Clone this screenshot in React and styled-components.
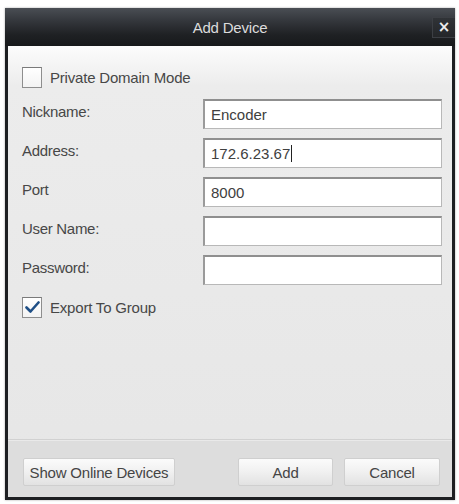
import React from "react";
import styled, { createGlobalStyle } from "styled-components";

const Global = createGlobalStyle`
  html, body { margin: 0; padding: 0; background: #ffffff; }
  body { font-family: "Liberation Sans", Arial, sans-serif; }
  * { box-sizing: border-box; }
`;

const Page = styled.div`
  padding: 8px 4px 4px 5px;
  width: 459px;
  height: 504px;
`;

const Dialog = styled.div`
  width: 450px;
  height: 492px;
  display: flex;
  flex-direction: column;
  background: #1d1f22;
  box-shadow: 0 0 2px rgba(0, 0, 0, 0.35);
`;

const TitleBar = styled.div`
  position: relative;
  height: 38px;
  flex: none;
  display: flex;
  align-items: center;
  justify-content: center;
  background: linear-gradient(#4a4e54 0%, #33363b 35%, #1f2124 70%, #17191b 100%);
  color: #dcdcdc;
  font-size: 15px;
  letter-spacing: -0.2px;
`;

const CloseButton = styled.button`
  position: absolute;
  right: 0;
  top: 9px;
  width: 23px;
  height: 21px;
  border: 1px solid #3c3f44;
  border-right: none;
  background: linear-gradient(#303337, #242629);
  color: #eeeeee;
  font-family: "DejaVu Sans", sans-serif;
  font-size: 15px;
  font-weight: bold;
  line-height: 1;
  padding: 0;
  display: flex;
  align-items: center;
  justify-content: center;
`;

const Body = styled.div`
  flex: 1;
  display: flex;
  flex-direction: column;
  margin: 0 3px 3px 3px;
  background: linear-gradient(#fcfcfc 0px, #ececec 40px, #e6e6e6 100%);
  color: #474747;
  font-size: 15px;
`;

const Content = styled.div`
  flex: 1;
  padding: 20px 10px 0 14px;
  display: flex;
  flex-direction: column;
`;

const CheckRow = styled.label`
  display: flex;
  align-items: center;
  gap: 8px;
  height: 22px;
  letter-spacing: -0.2px;
`;

const Box = styled.span`
  width: 20px;
  height: 21px;
  flex: none;
  border: 1px solid #8e8e8e;
  border-top-color: #7a7a7a;
  background: linear-gradient(#ffffff, #f3f3f3);
  display: flex;
  align-items: center;
  justify-content: center;
`;

const Form = styled.div`
  display: grid;
  grid-template-columns: 181px 239px;
  row-gap: 9px;
  margin-top: 11px;
`;

const Label = styled.div`
  display: flex;
  align-items: center;
  padding-bottom: 5px;
  letter-spacing: -0.3px;
`;

const Field = styled.div`
  height: 30px;
  border: 1px solid #b8b8b8;
  border-top: 2px solid #8f8f8f;
  border-left: 2px solid #9a9a9a;
  background: #ffffff;
  display: flex;
  align-items: center;
  padding-left: 6px;
  color: #404040;
  font-size: 15px;
`;

const Caret = styled.span`
  display: inline-block;
  width: 1px;
  height: 17px;
  background: #222;
  margin-left: 1px;
`;

const ExportRow = styled(CheckRow)`
  margin-top: 11px;
`;

const Footer = styled.div`
  height: 58px;
  flex: none;
  display: flex;
  align-items: flex-start;
  padding: 18px 12px 0 15px;
  background: #dddddd;
  border-top: 1px solid #d1d1d1;
  box-shadow: inset 0 1px 0 #e9e9e9;
`;

const Button = styled.button`
  height: 28px;
  width: ${(p) => p.$w}px;
  margin-left: ${(p) => p.$ml || 0}px;
  border: 1px solid #cfcfcf;
  border-radius: 2px;
  background: linear-gradient(#fbfbfb 0%, #f0f0f0 50%, #e2e2e2 100%);
  color: #454545;
  font-family: "Liberation Sans", Arial, sans-serif;
  font-size: 15px;
  letter-spacing: -0.2px;
  padding: 0;
`;

const Check = () => (
  <svg width="15" height="13" viewBox="0 0 15 13">
    <path d="M1.5 6.5 L5.5 10.5 L13.5 1.5" fill="none" stroke="#1f4f86" strokeWidth="2.6" strokeLinecap="round" strokeLinejoin="round" />
  </svg>
);

const fields = [
  { label: "Nickname:", value: "Encoder" },
  { label: "Address:", value: "172.6.23.67", caret: true },
  { label: "Port", value: "8000" },
  { label: "User Name:", value: "" },
  { label: "Password:", value: "" },
];

export default function App() {
  return (
    <>
      <Global />
      <Page>
        <Dialog>
          <TitleBar>
            Add Device
            <CloseButton>×</CloseButton>
          </TitleBar>
          <Body>
            <Content>
              <CheckRow>
                <Box />
                Private Domain Mode
              </CheckRow>
              <Form>
                {fields.map((f) => (
                  <React.Fragment key={f.label}>
                    <Label>{f.label}</Label>
                    <Field>
                      {f.value}
                      {f.caret && <Caret />}
                    </Field>
                  </React.Fragment>
                ))}
              </Form>
              <ExportRow>
                <Box>
                  <Check />
                </Box>
                Export To Group
              </ExportRow>
            </Content>
            <Footer>
              <Button $w={152}>Show Online Devices</Button>
              <Button $w={95} $ml={63}>Add</Button>
              <Button $w={96} $ml={11}>Cancel</Button>
            </Footer>
          </Body>
        </Dialog>
      </Page>
    </>
  );
}
